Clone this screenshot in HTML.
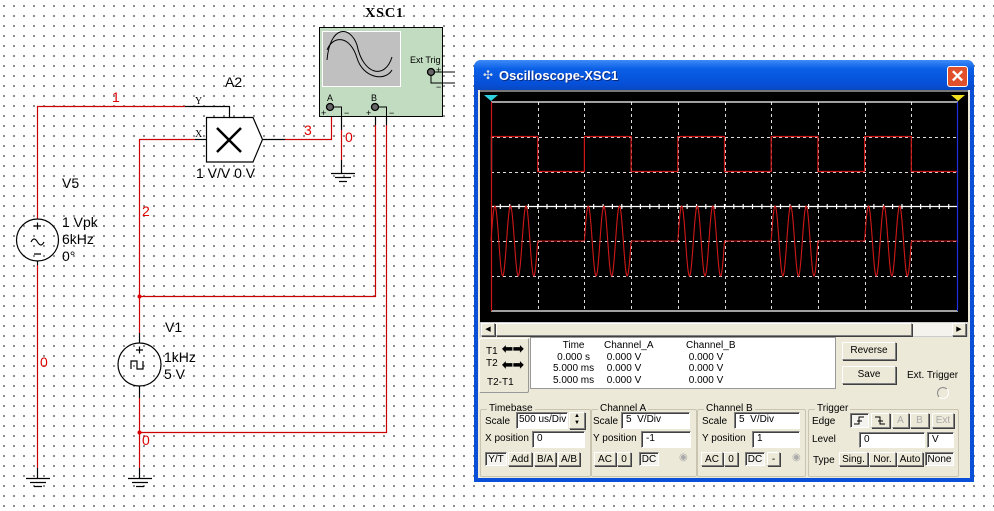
<!DOCTYPE html>
<html><head><meta charset="utf-8"><style>
*{margin:0;padding:0;box-sizing:border-box}
body{width:994px;height:511px;overflow:hidden;position:relative;background:#fff;font-family:"Liberation Sans",sans-serif}
#dots{position:absolute;left:0;top:0;width:994px;height:511px;background-image:radial-gradient(circle,#777 0.8px,transparent 1.2px);background-size:10px 10px;background-position:-1px 1px}
.a{position:absolute}
.t{position:absolute;font-size:12px;line-height:12px;color:#000;white-space:nowrap}
.win{position:absolute;left:474px;top:60px;width:500px;height:422px;background:#0a4fd8;border-radius:7px 7px 0 0}
.inner{position:absolute;left:4px;top:30px;width:492px;height:388px;background:#ece9d8}
.btn{position:absolute;background:#ece9d8;border:1px solid;border-color:#fff #808080 #808080 #fff;box-shadow:1px 1px 0 #404040;font-size:10px;text-align:center;line-height:14px;color:#000;white-space:nowrap}
.fld{position:absolute;background:#fff;border:1px solid;border-color:#808080 #fff #fff #808080;box-shadow:inset 1px 1px 0 #404040;font-size:10px;line-height:14px;padding-left:4px;white-space:nowrap;overflow:hidden}
.grp{position:absolute;border:1px solid #c8c4b0;border-radius:2px}
.gl{position:absolute;top:-7px;left:6px;background:#ece9d8;padding:0 2px;font-size:10px;line-height:12px}
.s{font-size:10px;position:absolute;line-height:12px;white-space:nowrap}
.dn{border-color:#808080 #fff #fff #808080;box-shadow:inset 1px 1px 0 #404040;background:#f4f3ee}
</style></head><body>
<div id="dots"></div>
<svg class="a" style="left:0;top:0" width="994" height="511">
<g fill="none" stroke-width="1.2">
<path d="M37.5 219 V106.5 H185" stroke="#c00"/>
<path d="M185 106.5 H229.5 V117" stroke="#000"/>
<path d="M139.5 296 V139.5 H195" stroke="#c00"/>
<path d="M195 139.5 H206" stroke="#000"/>
<path d="M263 139.5 H285" stroke="#000"/>
<path d="M285 139.5 H331.5 V112" stroke="#c00"/>
<path d="M331.5 112 V107" stroke="#000"/>
<path d="M341.5 107 V130" stroke="#000"/>
<path d="M341.5 130 V160" stroke="#c00"/>
<path d="M341.5 160 V173" stroke="#000"/>
<path d="M375.5 107 V125" stroke="#000"/>
<path d="M375.5 125 V296.5 H139.5" stroke="#c00"/>
<path d="M386.5 107 V125" stroke="#000"/>
<path d="M386.5 125 V432.5 H139.5" stroke="#c00"/>
<path d="M37.5 261 V265" stroke="#000"/>
<path d="M37.5 265 V468" stroke="#c00"/>
<path d="M37.5 468 V478" stroke="#000"/>
<path d="M139.5 296 V333" stroke="#c00"/>
<path d="M139.5 333 V343" stroke="#000"/>
<path d="M139.5 386 V398" stroke="#000"/>
<path d="M139.5 398 V468" stroke="#c00"/>
<path d="M139.5 468 V478" stroke="#000"/>
</g>
<g stroke="#000" stroke-width="1.2" fill="none">
<path d="M26 478.5 H50 M30 482.5 H46 M34 486.5 H42"/>
<path d="M128 478.5 H152 M132 482.5 H148 M136 486.5 H144"/>
<path d="M331 173.5 H355 M335 177.5 H351 M339 181.5 H347"/>
<circle cx="37.5" cy="240" r="21"/>
<path d="M31 242 q3 -6 6.5 0 t6.5 0"/>
<path d="M34 226 h7 M37.5 222.5 v7 M34 254 h7"/>
<circle cx="139.5" cy="364.5" r="21.5"/>
<path d="M131 369 v-8 h6 v8 h6 v-8"/>
<path d="M136 350 h7 M139.5 346.5 v7"/>
<path d="M206.5 117.5 H253 L262.5 139.5 L253 162 H206.5 Z" fill="#fff"/>
<path d="M217 128 L241 152 M241 128 L217 152" stroke-width="2.5"/>
</g>
<circle cx="139.5" cy="296.5" r="2" fill="#d00"/>
<circle cx="139.5" cy="432.5" r="2" fill="#d00"/>
<rect x="319.5" y="27.5" width="123" height="89" fill="#c1dcc1" stroke="#000"/>
<rect x="322.5" y="31.5" width="78" height="55" fill="#c0c0c0" stroke="#fff"/>
<path d="M327 60 C330 25,350 25,357 45 C363 75,385 80,392 57" fill="none" stroke="#000"/>
<path d="M327 50 C333 35,350 35,357 58 C363 78,385 82,392 70" fill="none" stroke="#000"/>
<path d="M330 107 H341.5 V117 M375 107 H386.5 V117 M431 72 H455 M431 72 V83 H455" stroke="#000" fill="none"/>
<g fill="#666" stroke="#000" stroke-width="1.3"><circle cx="330" cy="107" r="3.5"/><circle cx="375" cy="107" r="3.5"/><circle cx="431" cy="72" r="3.5"/></g>
</svg>
<div class="t" style="left:365px;top:8px;font-family:'Liberation Serif',serif;font-weight:bold;font-size:14px;letter-spacing:1px">XSC1</div>
<div class="s" style="left:410px;top:54px;font-size:9px">Ext Trig</div>
<div class="s" style="left:436px;top:64px;font-size:9px">+</div>
<div class="s" style="left:436px;top:81px;font-size:9px">−</div>
<div class="s" style="left:327px;top:92px;font-size:9px">A</div>
<div class="s" style="left:371px;top:92px;font-size:9px">B</div>
<div class="s" style="left:321px;top:107px;font-size:9px">+</div>
<div class="s" style="left:344px;top:107px;font-size:9px">−</div>
<div class="s" style="left:366px;top:107px;font-size:9px">+</div>
<div class="s" style="left:389px;top:107px;font-size:9px">−</div>
<div class="s" style="left:195px;top:96px;font-family:'Liberation Serif',serif">Y</div>
<div class="s" style="left:195px;top:129px;font-family:'Liberation Serif',serif">X</div>
<div class="t" style="left:225px;top:76px;font-size:14px">A2</div>
<div class="t" style="left:196px;top:167px;font-size:14px">1 V/V 0 V</div>
<div class="t" style="left:62px;top:177px;font-size:14px">V5</div>
<div class="t" style="left:62px;top:214px;font-size:14px;line-height:17px">1 Vpk<br>6kHz<br>0°</div>
<div class="t" style="left:165px;top:321px;font-size:14px">V1</div>
<div class="t" style="left:164px;top:349px;font-size:14px;line-height:17px">1kHz<br>5 V</div>
<div class="t" style="left:112px;top:91px;font-size:14px;color:#d00">1</div>
<div class="t" style="left:142px;top:205px;font-size:14px;color:#d00">2</div>
<div class="t" style="left:304px;top:124px;font-size:14px;color:#d00">3</div>
<div class="t" style="left:345px;top:131px;font-size:14px;color:#d00">0</div>
<div class="t" style="left:40px;top:356px;font-size:14px;color:#d00">0</div>
<div class="t" style="left:142px;top:434px;font-size:14px;color:#d00">0</div>

<div class="win">
<div class="a" style="left:0;top:0;width:500px;height:30px;border-radius:7px 7px 0 0;background:linear-gradient(#3d8cf6,#0a5fe6 30%,#0650d8 80%,#0a48c0)"></div>
<div class="a" style="left:9px;top:8px;color:#ddd;font-size:12px">✣</div>
<div class="a" style="left:25px;top:8px;color:#fff;font-weight:bold;font-size:13px;text-shadow:1px 1px #0a2a80">Oscilloscope-XSC1</div>
<div class="a" style="left:473px;top:6px;width:21px;height:21px;border:1px solid #fff;border-radius:3px;background:#e0502a;color:#fff;font-size:17px;line-height:19px;text-align:center;font-weight:bold">✕</div>
<div class="inner">
<svg class="a" style="left:2px;top:0" width="488" height="232" id="scope"></svg>
<div class="a" style="left:2px;top:232px;width:488px;height:15px;background:#f4f3ee;border:1px solid #ccc"></div>
<div class="btn" style="left:3px;top:233px;width:14px;height:13px;font-size:7px;line-height:11px">◀</div>
<div class="btn" style="left:18px;top:233px;width:416px;height:13px"></div>
<div class="btn" style="left:474px;top:233px;width:14px;height:13px;font-size:7px;line-height:11px">▶</div>
</div>
</div>
<div class="grp" style="left:479px;top:338px;width:50px;height:55px;border-color:#fff #999 #999 #fff"></div>
<div class="s" style="left:486px;top:346px">T1</div><div class="s" style="left:486px;top:358px">T2</div>
<div class="s" style="left:487px;top:377px">T2-T1</div>
<div class="s" style="left:502px;top:343px;font-size:13px;font-weight:bold">⬅➡</div>
<div class="s" style="left:502px;top:359px;font-size:13px;font-weight:bold">⬅➡</div>
<div class="a" style="left:530px;top:337px;width:306px;height:52px;background:#fff;border:1px solid #999"></div>
<div class="s" style="left:553px;top:340px;line-height:11.5px;text-align:center">Time<br>0.000 s<br>5.000 ms<br>5.000 ms</div>
<div class="s" style="left:604px;top:340px;line-height:11.5px">Channel_A<br>&nbsp;0.000 V<br>&nbsp;0.000 V<br>&nbsp;0.000 V</div>
<div class="s" style="left:686px;top:340px;line-height:11.5px">Channel_B<br>&nbsp;0.000 V<br>&nbsp;0.000 V<br>&nbsp;0.000 V</div>
<div class="btn" style="left:842px;top:342px;width:54px;height:18px;line-height:16px">Reverse</div>
<div class="btn" style="left:842px;top:366px;width:54px;height:18px;line-height:16px">Save</div>
<div class="s" style="left:907px;top:370px">Ext. Trigger</div>
<div class="a" style="left:937px;top:387px;width:12px;height:12px;border-radius:50%;border:1px solid #999;border-color:#888 #fff #fff #888"></div>

<div class="grp" style="left:480px;top:409px;width:111px;height:68px"><span class="gl">Timebase</span></div>
<div class="s" style="left:485px;top:416px">Scale</div>
<div class="fld" style="left:516px;top:412px;width:52px;height:17px;padding-left:2px">500 us/Div</div>
<div class="btn" style="left:569px;top:412px;width:16px;height:17px;font-size:6px;line-height:7px">▲<br>▼</div>
<div class="s" style="left:485px;top:433px">X position</div>
<div class="fld" style="left:532px;top:431px;width:53px;height:17px">0</div>
<div class="btn dn" style="left:485px;top:452px;width:22px;height:14px">Y/T</div>
<div class="btn" style="left:508px;top:452px;width:24px;height:14px">Add</div>
<div class="btn" style="left:534px;top:452px;width:22px;height:14px">B/A</div>
<div class="btn" style="left:558px;top:452px;width:22px;height:14px">A/B</div>

<div class="grp" style="left:591px;top:409px;width:106px;height:68px"><span class="gl">Channel A</span></div>
<div class="s" style="left:593px;top:416px">Scale</div>
<div class="fld" style="left:621px;top:412px;width:69px;height:17px">5 &nbsp;V/Div</div>
<div class="s" style="left:593px;top:433px">Y position</div>
<div class="fld" style="left:641px;top:431px;width:50px;height:17px">-1</div>
<div class="btn" style="left:594px;top:452px;width:22px;height:14px">AC</div>
<div class="btn" style="left:617px;top:452px;width:14px;height:14px">0</div>
<div class="btn dn" style="left:639px;top:452px;width:20px;height:14px">DC</div>
<div class="s" style="left:679px;top:452px;color:#aaa">◉</div>

<div class="grp" style="left:697px;top:409px;width:109px;height:68px"><span class="gl">Channel B</span></div>
<div class="s" style="left:702px;top:416px">Scale</div>
<div class="fld" style="left:734px;top:412px;width:66px;height:17px">5 &nbsp;V/Div</div>
<div class="s" style="left:702px;top:433px">Y position</div>
<div class="fld" style="left:752px;top:431px;width:48px;height:17px">1</div>
<div class="btn" style="left:701px;top:452px;width:22px;height:14px">AC</div>
<div class="btn" style="left:724px;top:452px;width:14px;height:14px">0</div>
<div class="btn dn" style="left:745px;top:452px;width:20px;height:14px">DC</div>
<div class="btn" style="left:767px;top:452px;width:13px;height:14px">-</div>
<div class="s" style="left:792px;top:452px;color:#aaa">◉</div>

<div class="grp" style="left:808px;top:409px;width:151px;height:68px"><span class="gl">Trigger</span></div>
<div class="s" style="left:812px;top:416px">Edge</div>
<div class="btn dn" style="left:850px;top:413px;width:19px;height:15px"><svg width="17" height="13"><path d="M3 10 H8 V3 H13 M6 7 H11" stroke="#000" fill="none"/></svg></div>
<div class="btn" style="left:871px;top:413px;width:19px;height:15px"><svg width="17" height="13"><path d="M3 3 H8 V10 H13 M6 7 H11" stroke="#000" fill="none"/></svg></div>
<div class="btn" style="left:892px;top:413px;width:17px;height:15px;color:#aaa">A</div>
<div class="btn" style="left:910px;top:413px;width:19px;height:15px;color:#aaa">B</div>
<div class="btn" style="left:932px;top:413px;width:22px;height:15px;color:#aaa">Ext</div>
<div class="s" style="left:812px;top:434px">Level</div>
<div class="fld" style="left:859px;top:432px;width:66px;height:16px">0</div>
<div class="fld" style="left:927px;top:432px;width:27px;height:16px">V</div>
<div class="s" style="left:813px;top:455px">Type</div>
<div class="btn" style="left:839px;top:452px;width:29px;height:14px">Sing.</div>
<div class="btn" style="left:869px;top:452px;width:27px;height:14px">Nor.</div>
<div class="btn" style="left:897px;top:452px;width:26px;height:14px">Auto</div>
<div class="btn dn" style="left:925px;top:452px;width:29px;height:14px">None</div>

<script>
(function(){
var s=document.getElementById('scope');
var ox=480,oy=90;
function X(x){return (x-ox).toFixed(1)} function Y(y){return (y-oy).toFixed(1)}
var h='<rect x="0" y="0" width="488" height="232" fill="#000"/>';
h+='<rect x="0" y="0" width="488" height="2" fill="#777"/>';
var L=491,R=958,T=102,B=311,dx=(R-L)/10,dy=(B-T)/6;
h+='<g stroke="#ddd" stroke-dasharray="3,3" stroke-width="1">';
for(var i=1;i<10;i++){var x=Math.round(L+i*dx)+.5;h+='<line x1="'+X(x)+'" y1="'+Y(T)+'" x2="'+X(x)+'" y2="'+Y(B)+'"/>';}
for(var j=1;j<6;j++){if(j==3)continue;var y=Math.round(T+j*dy)+.5;h+='<line x1="'+X(L)+'" y1="'+Y(y)+'" x2="'+X(R)+'" y2="'+Y(y)+'"/>';}
h+='</g>';
h+='<g stroke="#fff" stroke-width="1.2"><line x1="'+X(L)+'" y1="'+Y(T)+'" x2="'+X(R)+'" y2="'+Y(T)+'"/><line x1="'+X(L)+'" y1="'+Y(B)+'" x2="'+X(R)+'" y2="'+Y(B)+'"/><line x1="'+X(L)+'" y1="'+Y(206.5)+'" x2="'+X(R)+'" y2="'+Y(206.5)+'"/>';
for(var k=1;k<50;k++){var tx=L+k*dx/5;h+='<line x1="'+X(tx)+'" y1="'+Y(204)+'" x2="'+X(tx)+'" y2="'+Y(209)+'"/>';}
h+='<line x1="'+X(L+.5)+'" y1="'+Y(136)+'" x2="'+X(L+.5)+'" y2="'+Y(171)+'"/></g>';
var hi=136.5,lo=171.5,p='M'+X(L)+' '+Y(hi);
for(var n=0;n<10;n++){var x1=L+(n+1)*dx;var cur=(n%2==0)?hi:lo,nx=(n%2==0)?lo:hi;p+=' L'+X(x1)+' '+Y(cur);if(n<9)p+=' L'+X(x1)+' '+Y(nx);}
h+='<path d="'+p+'" fill="none" stroke="#d01818" stroke-width="1.2"/>';
var q='';
for(var px=L;px<=R;px+=0.5){var seg=Math.floor((px-L)/dx);var yv=241;if(seg%2==0&&seg<10){yv=241-35*Math.sin(2*Math.PI*3*(px-L-seg*dx)/dx);}q+=(q?' L':'M')+X(px)+' '+Y(yv);}
h+='<path d="'+q+'" fill="none" stroke="#d01818" stroke-width="1.1"/>';
h+='<line x1="'+X(L+.5)+'" y1="'+Y(T)+'" x2="'+X(L+.5)+'" y2="'+Y(B)+'" stroke="#d01818" stroke-width="1.2"/>';
h+='<line x1="'+X(R-.5)+'" y1="'+Y(T)+'" x2="'+X(R-.5)+'" y2="'+Y(B)+'" stroke="#2030e0" stroke-width="1.2"/>';
h+='<path d="M'+X(484)+' '+Y(95)+' h14 l-7 6 z" fill="#30d0e0"/>';
h+='<path d="M'+X(951)+' '+Y(95)+' h14 l-7 6 z" fill="#f0e020"/>';
s.innerHTML=h;
})();
</script>
</body></html>
